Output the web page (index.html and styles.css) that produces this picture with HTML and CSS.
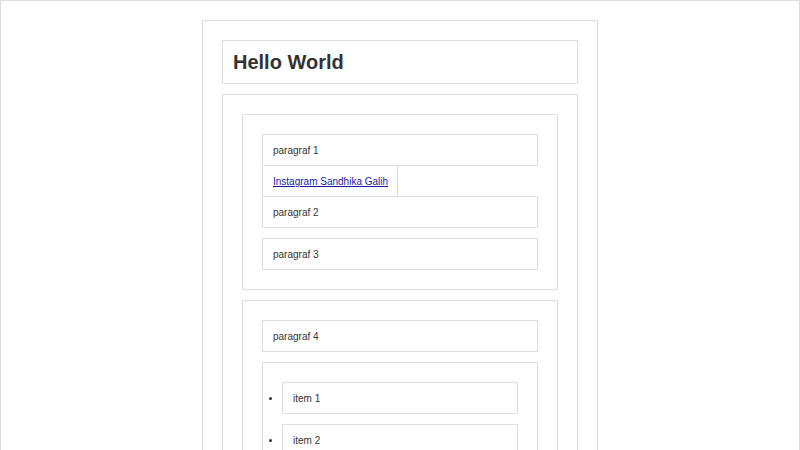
FILE: index.html
```html
<!DOCTYPE html>
<html lang="id">
<head>
<meta charset="utf-8">
<title>Box Model</title>
<link rel="stylesheet" href="styles.css">
</head>
<body>
  <div class="container">
    <h1 class="title">Hello World</h1>
    <section class="outer">
      <section class="inner">
        <p class="para">paragraf 1</p>
        <a class="link" href="#">Instagram Sandhika Galih</a>
        <p class="para para-tight">paragraf 2</p>
        <p class="para para-gap">paragraf 3</p>
      </section>
      <section class="inner inner-gap">
        <p class="para">paragraf 4</p>
        <ul class="list">
          <li class="item">item 1</li>
          <li class="item item-gap">item 2</li>
          <li class="item item-gap">item 3</li>
        </ul>
      </section>
    </section>
  </div>
</body>
</html>
```
FILE: styles.css
```css
html, body {
  margin: 0;
  padding: 0;
}

body {
  border: 1px solid #ddd;
  padding: 19px 0;
  font-family: "Liberation Sans", Arial, sans-serif;
  font-size: 10px;
  line-height: 12px;
  color: #333;
  background: #fff;
  min-height: 600px;
  box-sizing: border-box;
}

.container {
  width: 396px;
  margin: 0 auto;
  border: 1px solid #ddd;
  padding: 19px;
  box-sizing: border-box;
}

.title {
  margin: 0;
  border: 1px solid #ddd;
  padding: 10px;
  font-size: 20px;
  line-height: 22px;
  font-weight: bold;
  color: #333;
}

.outer {
  margin-top: 10px;
  border: 1px solid #ddd;
  padding: 19px;
}

.inner {
  border: 1px solid #ddd;
  padding: 19px;
}

.inner-gap {
  margin-top: 10px;
}

.para {
  margin: 0;
  border: 1px solid #ddd;
  padding: 10px 10px 8px;
}

.para-tight {
  margin-top: -1px;
}

.para-gap {
  margin-top: 10px;
}

.link {
  display: block;
  width: fit-content;
  margin-top: -1px;
  border: 1px solid #ddd;
  padding: 10px 9px 8px 10px;
  color: #1a1aa6;
  text-decoration: underline;
}

.list {
  margin: 10px 0 0 0;
  border: 1px solid #ddd;
  padding: 19px;
  list-style: disc outside;
}

.item {
  border: 1px solid #ddd;
  padding: 10px 10px 8px;
}

.item-gap {
  margin-top: 10px;
}
```
